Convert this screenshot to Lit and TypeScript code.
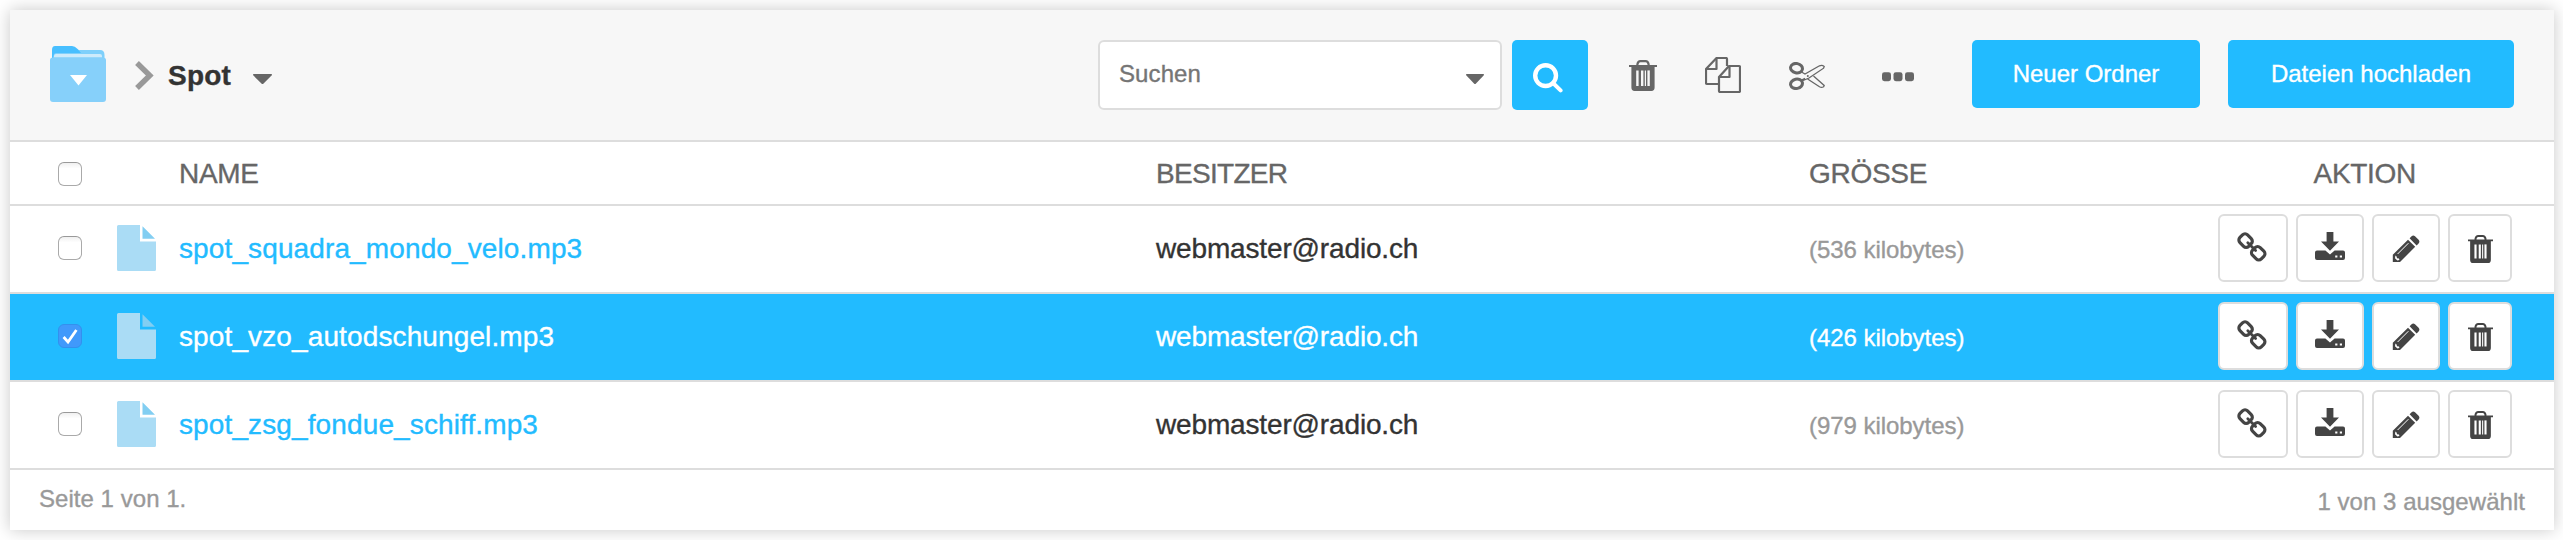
import { LitElement, html, css, svg } from "lit";
import { customElement, property } from "lit/decorators.js";
import { classMap } from "lit/directives/class-map.js";

const icons: Record<string, { w: number; h: number; body: unknown }> = {
  trash: {
    w: 28,
    h: 31,
    body: svg`<path d="M8.4 5.4V4.2Q9 1.2 11.4 1.2H16.6Q19 1.2 19.6 4.2V5.4" fill="none" stroke="currentColor" stroke-width="2.2"/>
      <path d="M0 5H28V7H25.6V27.6Q25.6 31 22.4 31H5.6Q2.4 31 2.4 27.6V7H0Z" fill="currentColor"/>
      <path d="M8.4 10.4V26M13.2 10.4V26" stroke="var(--hole,#fff)" stroke-width="2.4"/>
      <path d="M16.4 10.4V26" stroke="var(--hole,#fff)" stroke-width="1.2"/>
      <path d="M19.6 10.4V26" stroke="var(--hole,#fff)" stroke-width="2.4"/>`,
  },
  copy: {
    w: 36,
    h: 36,
    body: svg`<g fill="none" stroke="currentColor" stroke-width="2.2" stroke-linejoin="round">
      <path d="M13 27H2Q1 27 1 26V12L11.5 1H21Q22 1 22 2V9"/><path d="M2 12H11.5V1.5"/>
      <path d="M14 20L24 9H34Q35 9 35 10V34Q35 35 34 35H15Q14 35 14 34Z" fill="var(--hole,#fff)"/><path d="M15 20H24.5V9.5"/></g>`,
  },
  scissors: {
    w: 36,
    h: 28,
    body: svg`<g fill="none" stroke="currentColor">
      <ellipse cx="7.5" cy="6.2" rx="6" ry="4.7" stroke-width="3" transform="rotate(12 7.5 6.2)"/>
      <ellipse cx="7.5" cy="21.8" rx="6" ry="4.7" stroke-width="3" transform="rotate(-12 7.5 21.8)"/>
      <path d="M12.5 10L16 12L30.5 3.8Q33 2.6 35.2 4.4L34.6 6.2L20 16L13 19M12.5 18L16 16.4" stroke-width="1.3"/>
      <path d="M24.5 14L35.2 23.4L34.6 24.8Q32.6 26 30.5 24.8L18.6 17" stroke-width="1.3"/>
      <circle cx="18.8" cy="14" r="1" fill="currentColor" stroke="none"/></g>`,
  },
  dots: {
    w: 32,
    h: 10,
    body: svg`<g fill="currentColor"><rect y=".2" width="9" height="9" rx="2.4"/><rect x="11.5" y=".2" width="9" height="9" rx="2.4"/><rect x="23" y=".2" width="9" height="9" rx="2.4"/></g>`,
  },
  search: {
    w: 30,
    h: 30,
    body: svg`<circle cx="12.6" cy="12.6" r="10.4" fill="none" stroke="currentColor" stroke-width="4.4"/><path d="M20 20L27.6 27.4" stroke="currentColor" stroke-width="4" stroke-linecap="round"/>`,
  },
  link: {
    w: 30,
    h: 30,
    body: svg`<g fill="none" stroke="currentColor" stroke-width="3.2">
      <rect x="-6.2" y="-5.4" width="12.4" height="10.8" rx="3.6" transform="translate(8.6 8.6) rotate(45)"/>
      <rect x="-6.2" y="-5.4" width="12.4" height="10.8" rx="3.6" transform="translate(21.2 21.2) rotate(45)"/>
      <path d="M10.8 10.8L18.6 18.6" stroke-linecap="round" stroke-width="2.8"/></g>`,
  },
  download: {
    w: 30,
    h: 28,
    body: svg`<path fill="currentColor" d="M11.6 0H18.4V9.4H24L15 18.8L6 9.4H11.6Z"/>
      <path fill="currentColor" fill-rule="evenodd" d="M2 18.6H10.4L15 22.4L19.6 18.6H28Q30 18.6 30 20.6V26Q30 28 28 28H2Q0 28 0 26V20.6Q0 18.6 2 18.6ZM20.2 23.5H22.4V25.4H20.2ZM24.8 23.5H27V25.4H24.8Z"/>`,
  },
  pencil: {
    w: 28,
    h: 28,
    body: svg`<path fill="currentColor" d="M19.6 1.2Q21.2-.4 23 1.2L26.6 4.8Q28.2 6.6 26.6 8.4L24.6 10.4L17.6 3.2ZM16 4.8L23.2 11.8L8 27H.8V19.8Z"/>
      <path d="M5.6 19L16.4 8.2" stroke="#fff" stroke-width="1"/><path d="M3.4 20.6L4.6 21.4L5 23.2L7 23.6L7.4 25L5.4 25.6L3 23.2Z" fill="#fff"/>`,
  },
};

const icon = (name: string, w?: number, h?: number) => {
  const i = icons[name];
  return html`<svg width=${w ?? i.w} height=${h ?? i.h} viewBox="0 0 ${i.w} ${i.h}" preserveAspectRatio="none">${i.body}</svg>`;
};

const shared = css`
  * { box-sizing: border-box; }
  svg { display: block; flex: none; }
  .box {
    width: 24px; height: 24px; border-radius: 6px; border: 1.5px solid #aaa; border-top-color: #999;
    background: linear-gradient(#f0f0f0, #fff 25%); display: block;
  }
  .box.on { background: #4099fb; border: 1px solid #3390ee; }
  .row { display: grid; grid-template-columns: 59px 62px 977px 653px 1fr; padding: 0 42px 2px 48px; align-items: center; border-bottom: 2px solid #ddd; }
  .tail { display: flex; justify-content: space-between; align-items: center; }
`;

@customElement("file-row")
class FileRow extends LitElement {
  @property() name = "";
  @property() owner = "";
  @property() size = "";
  @property({ type: Boolean }) selected = false;

  static styles = [
    shared,
    css`
      :host { display: block; }
      .row { height: 88px; color: #333; background: #fff; }
      .name { color: #22bbff; letter-spacing: 0.12px; padding-top: 1px; }
      .owner { letter-spacing: -0.15px; padding-top: 1px; }
      .size { font-size: 24px; color: #999; padding-top: 3px; letter-spacing: -0.05px; }
      .on.row { background: #22bbff; }
      .on .name, .on .owner, .on .size { color: #fff; }
      .actions { display: flex; gap: 8px; }
      .btn { height: 68px; border: 2px solid #ddd; border-radius: 6px; background: #fff; color: #444; display: flex; justify-content: center; }
      .link { width: 70px; padding: 16px 2px 0 0; }
      .download { width: 68px; padding-top: 16px; }
      .pencil { width: 68px; padding-top: 19px; }
      .trash { width: 64px; padding-top: 19px; }
    `,
  ];

  render() {
    return html`<div class=${classMap({ row: true, on: this.selected })}>
      <span class=${classMap({ box: true, on: this.selected })}>
        ${this.selected
          ? html`<svg width="22" height="22" viewBox="0 0 22 22"><path d="M4.6 12L9 17L17.4 5" fill="none" stroke="#fff" stroke-width="2.8"/></svg>`
          : ""}
      </span>
      <svg width="39" height="46" viewBox="0 0 39 46">
        <path d="M1.5 0H23V16.5H39V44.5Q39 46 37.5 46H1.5Q0 46 0 44.5V1.5Q0 0 1.5 0Z" fill="#aadcf5"/>
        <path d="M25.5 1.2L38 13.7H25.5Z" fill="#82cef2"/>
      </svg>
      <span class="name">${this.name}</span>
      <span class="owner">${this.owner}</span>
      <div class="tail">
        <span class="size">${this.size}</span>
        <div class="actions">
          <div class="btn link">${icon("link")}</div>
          <div class="btn download">${icon("download")}</div>
          <div class="btn pencil">${icon("pencil")}</div>
          <div class="btn trash">${icon("trash", 25, 28)}</div>
        </div>
      </div>
    </div>`;
  }
}

@customElement("app-root")
class AppRoot extends LitElement {
  static styles = [
    shared,
    css`
      :host {
        display: block; box-sizing: border-box; height: 540px; padding: 10px 9px 10px 10px; overflow: hidden;
        background: #fff; font: 28px/32px "Liberation Sans", Arial, sans-serif; -webkit-text-stroke: 0.35px;
      }
      .panel { height: 520px; background: #fff; box-shadow: 0 0 16px rgba(0, 0, 0, 0.22); }
      .bar { --hole: #f7f7f7; height: 132px; background: #f7f7f7; border-bottom: 2px solid #ddd; display: flex; align-items: flex-start; padding: 30px 40px 0; color: #666; }
      .folder { margin-top: 6px; }
      .chev { margin: 21px 0 0 29px; }
      .crumb { font-weight: 700; color: #333; margin: 20px 0 0 14px; letter-spacing: 0.2px; }
      .crumb-caret { margin: 34px 0 0 22px; }
      .search { margin-left: auto; width: 404px; height: 70px; background: #fff; border: 2px solid #ddd; border-radius: 6px; display: flex; justify-content: space-between; padding: 15px 16px 0 19px; font-size: 24px; color: #757575; line-height: 34px; letter-spacing: 0.1px; }
      .search svg { margin-top: 17px; }
      .go { margin-left: 10px; width: 76px; height: 70px; background: #22bbff; border-radius: 5px; color: #fff; padding: 23px 0 0 21px; }
      .tools { display: flex; margin-left: 41px; align-items: flex-start; }
      .t1 { margin-top: 20px; }
      .t2 { margin: 17px 0 0 48px; }
      .t3 { margin: 22px 0 0 48px; }
      .t4 { margin: 32px 58px 0 57px; }
      .cta { height: 68px; border-radius: 5px; background: #22bbff; color: #fff; font-size: 24px; line-height: 67px; text-align: center; width: 228px; letter-spacing: 0; }
      .cta.wide { width: 286px; margin-left: 28px; }
      .head { height: 64px; color: #666; padding-top: 2px; padding-bottom: 0; }
      .head span { letter-spacing: -0.3px; }
      .head .owner { letter-spacing: -0.7px; }
      .head .act { padding-right: 96px; }
      .foot { display: flex; justify-content: space-between; padding: 13px 29px 0; font-size: 24px; color: #999; letter-spacing: 0.04px; }
      .picked { padding-top: 3px; }
    `,
  ];

  private caret(w: number) {
    return html`<svg width=${w} height="10" viewBox="0 0 18 10" preserveAspectRatio="none"><path d="M.8 0H17.2Q18.6.4 17.6 1.6L10 9.4Q9 10.4 8 9.4L.4 1.6Q-.6.4.8 0Z" fill="#666"/></svg>`;
  }

  render() {
    return html`<div class="panel">
      <div class="bar">
        <svg class="folder" width="56" height="56" viewBox="0 0 56 56">
          <path d="M5 0H22Q25 0 27 2.5L31 6V14H2V4Q2 0 5 0Z" fill="#48bfff"/>
          <path d="M28.5 4H50Q54.5 4 54.5 9V14H3Q3 7 6 7H31Z" fill="#7fd0fb"/>
          <path d="M4 11.5V10Q4 8 6 8H50Q52 8 52 10V11.5Z" fill="#cdebfb"/>
          <path d="M3 11.5H53Q56 11.5 56 14V53Q56 56 53 56H3Q0 56 0 53V14Q0 11.5 3 11.5Z" fill="#86d0fa"/>
          <path d="M20 29H37L28.5 39.5Z" fill="#fff"/>
        </svg>
        <svg class="chev" width="19" height="29" viewBox="0 0 19 29"><path d="M2 2L14.8 14.5L2 27" fill="none" stroke="#999" stroke-width="5.4"/></svg>
        <span class="crumb">Spot</span>
        <span class="crumb-caret">${this.caret(19)}</span>
        <div class="search"><span>Suchen</span>${this.caret(18)}</div>
        <div class="go">${icon("search")}</div>
        <div class="tools">
          <span class="t1">${icon("trash")}</span>
          <span class="t2">${icon("copy")}</span>
          <span class="t3">${icon("scissors")}</span>
          <span class="t4">${icon("dots")}</span>
        </div>
        <div class="cta">Neuer Ordner</div>
        <div class="cta wide">Dateien hochladen</div>
      </div>
      <div class="row head">
        <span class="box"></span><span></span><span>NAME</span><span class="owner">BESITZER</span>
        <div class="tail"><span>GRÖSSE</span><span class="act">AKTION</span></div>
      </div>
      <file-row name="spot_squadra_mondo_velo.mp3" owner="webmaster@radio.ch" size="(536 kilobytes)"></file-row>
      <file-row name="spot_vzo_autodschungel.mp3" owner="webmaster@radio.ch" size="(426 kilobytes)" selected></file-row>
      <file-row name="spot_zsg_fondue_schiff.mp3" owner="webmaster@radio.ch" size="(979 kilobytes)"></file-row>
      <div class="foot"><span>Seite 1 von 1.</span><span class="picked">1 von 3 ausgewählt</span></div>
    </div>`;
  }
}
